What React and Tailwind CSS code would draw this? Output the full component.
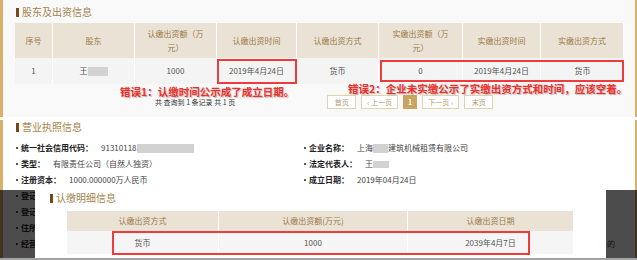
import React from 'react';

const FONT = { fontFamily: '"Noto Sans CJK SC", "Noto Sans", sans-serif' };

const topHeaders = [
  ['序号'],
  ['股东'],
  ['认缴出资额（万', '元）'],
  ['认缴出资时间'],
  ['认缴出资方式'],
  ['实缴出资额（万', '元）'],
  ['实缴出资时间'],
  ['实缴出资方式'],
];

const Blur = ({ w, h = 9 }) => (
  <span className="inline-block bg-[#d2d2d2] align-middle" style={{ width: w, height: h }} />
);

const SectionTitle = ({ children }) => (
  <div className="flex items-center gap-[3px]">
    <span className="w-[3px] h-[9px] bg-[#7a4714]" />
    <span className="text-[10px] leading-[12px] text-[#a6834d]">{children}</span>
  </div>
);

const InfoItem = ({ label, children, gap = 'ml-2' }) => (
  <div className="flex items-center h-[16px] text-[8px] whitespace-nowrap">
    <span className="w-[2px] h-[2px] bg-[#555] mr-[3px]" />
    <span className="font-bold text-[#222]">{label}</span>
    {children && <span className={`${gap} text-[#444] flex items-center`}>{children}</span>}
  </div>
);

const PagerBtn = ({ children, active, w }) => (
  <span
    className={`h-[14px] flex items-center justify-center text-[7px] border ${
      active ? 'bg-[#c8a45f] border-[#c8a45f] text-white font-bold' : 'bg-white border-[#e2d2ae] text-[#b49c70]'
    }`}
    style={{ width: w }}
  >
    {children}
  </span>
);

export default function App() {
  return (
    <div className="relative w-[637px] h-[260px] overflow-hidden bg-white border-b-2 border-[#a3a3a3]" style={FONT}>
      {/* 股东及出资信息 */}
      <div className="relative h-[117px] bg-[#f9f9f9] border-l-[3px] border-r-2 border-[#d8b06a]">
        <div className="pt-[6px] pl-[13px]">
          <SectionTitle>股东及出资信息</SectionTitle>
        </div>
        <div className="mt-[5px] ml-[12px] w-[609px]">
          <div className="grid grid-cols-[38px_82px_82px_80px_82px_84px_78px_83px] h-[35px] bg-[#e9e2d5]">
            {topHeaders.map((lines, i) => (
              <div
                key={i}
                className="flex flex-col items-center justify-center border-r border-white text-[8px] leading-[14px] text-[#9d7b46]"
              >
                {lines.map((l) => (
                  <span key={l}>{l}</span>
                ))}
              </div>
            ))}
          </div>
          <div className="grid grid-cols-[38px_82px_82px_80px_82px_84px_78px_83px] h-[26px] bg-[#f4f4f4] text-[8px] text-[#555]">
            <div className="flex items-center justify-center border-r border-white">1</div>
            <div className="flex items-center justify-center border-r border-white">
              王<Blur w={20} />
            </div>
            <div className="flex items-center justify-center border-r border-white">1000</div>
            <div className="flex items-center justify-center border-r border-white">2019年4月24日</div>
            <div className="flex items-center justify-center border-r border-white">货币</div>
            <div className="flex items-center justify-center border-r border-white">0</div>
            <div className="flex items-center justify-center border-r border-white">2019年4月24日</div>
            <div className="flex items-center justify-center">货币</div>
          </div>
        </div>
        <div className="mt-[11px] ml-[152px] flex items-center h-[14px]">
          <span className="text-[7px] text-[#333] whitespace-nowrap">共 查询到 1 条记录 共 1 页</span>
          <div className="ml-[92px] flex items-center gap-[5px]">
            <PagerBtn w={29}>首页</PagerBtn>
            <PagerBtn w={37}>‹ 上一页</PagerBtn>
            <PagerBtn w={14} active>1</PagerBtn>
            <PagerBtn w={37}>下一页 ›</PagerBtn>
            <PagerBtn w={29}>末页</PagerBtn>
          </div>
        </div>

        {/* annotations drawn over the screenshot */}
        <div className="absolute left-[214px] top-[59px] w-[80px] h-[25px] border-2 border-[#ee3b3b]" />
        <div className="absolute left-[377px] top-[60px] w-[244px] h-[22px] border-2 border-[#ee3b3b]" />
        <div className="absolute left-[117px] top-[86px] text-[10.5px] leading-[12px] font-bold text-[#f0302c] whitespace-nowrap [text-shadow:1px_1px_1px_rgba(0,0,0,0.25)]">
          错误1：认缴时间公示成了成立日期。
        </div>
        <div className="absolute left-[345px] top-[83px] text-[10.5px] leading-[12px] font-bold text-[#f0302c] whitespace-nowrap [text-shadow:1px_1px_1px_rgba(0,0,0,0.25)]">
          错误2：企业未实缴公示了实缴出资方式和时间，应该空着。
        </div>
      </div>

      {/* 营业执照信息 */}
      <div className="mt-[3px] h-[138px] border-l-[3px] border-r-2 border-[#d8b06a] bg-white">
        <div className="pt-[1px] pl-[13px]">
          <SectionTitle>营业执照信息</SectionTitle>
        </div>
        <div className="mt-[7px] pl-[13px] grid grid-cols-[288px_1fr]">
          <InfoItem label="统一社会信用代码：" gap="ml-[8px]">
            91310118<Blur w={57} />
          </InfoItem>
          <InfoItem label="企业名称：">
            上海<Blur w={15} />建筑机械租赁有限公司
          </InfoItem>
          <InfoItem label="类型：">有限责任公司（自然人独资）</InfoItem>
          <InfoItem label="法定代表人：">
            王<Blur w={16} h={7} />
          </InfoItem>
          <InfoItem label="注册资本：">1000.000000万人民币</InfoItem>
          <InfoItem label="成立日期：">2019年04月24日</InfoItem>
          <div className="col-span-2">
            <InfoItem label="登记机关" />
          </div>
          <div className="col-span-2">
            <InfoItem label="登记状态" />
          </div>
          <div className="col-span-2">
            <InfoItem label="住所" />
          </div>
          <div className="col-span-2 flex items-center h-[16px] text-[8px] whitespace-nowrap">
            <span className="w-[2px] h-[2px] bg-[#555] mr-[3px]" />
            <span className="font-bold text-[#222]">经营</span>
            <span className="ml-auto mr-[20px] text-[#444]">的</span>
          </div>
        </div>
      </div>

      {/* 认缴明细信息 popup over dimmed page */}
      <div className="absolute left-0 top-[190px] w-full h-[68px] bg-black/70">
        <div className="ml-[35px] w-[571px] h-full bg-white pt-[2px] pl-[15px]">
          <SectionTitle>认缴明细信息</SectionTitle>
          <div className="mt-[7px] ml-[17px] w-[506px] text-[8px]">
            <div className="grid grid-cols-[152px_189px_165px] h-[20px] bg-[#e9e2d5] text-[#9d7b46]">
              <div className="flex items-center justify-center border-r border-white">认缴出资方式</div>
              <div className="flex items-center justify-center border-r border-white">认缴出资额(万元)</div>
              <div className="flex items-center justify-center">认缴出资日期</div>
            </div>
            <div className="grid grid-cols-[152px_189px_165px] h-[23px] bg-[#f5f5f5] text-[#555]">
              <div className="flex items-center justify-center border-r border-white">货币</div>
              <div className="flex items-center justify-center border-r border-white">1000</div>
              <div className="flex items-center justify-center">2039年4月7日</div>
            </div>
          </div>
        </div>
        <div className="absolute left-[112px] top-[41px] w-[418px] h-[24px] border-2 border-[#ee3b3b]" />
      </div>
    </div>
  );
}
